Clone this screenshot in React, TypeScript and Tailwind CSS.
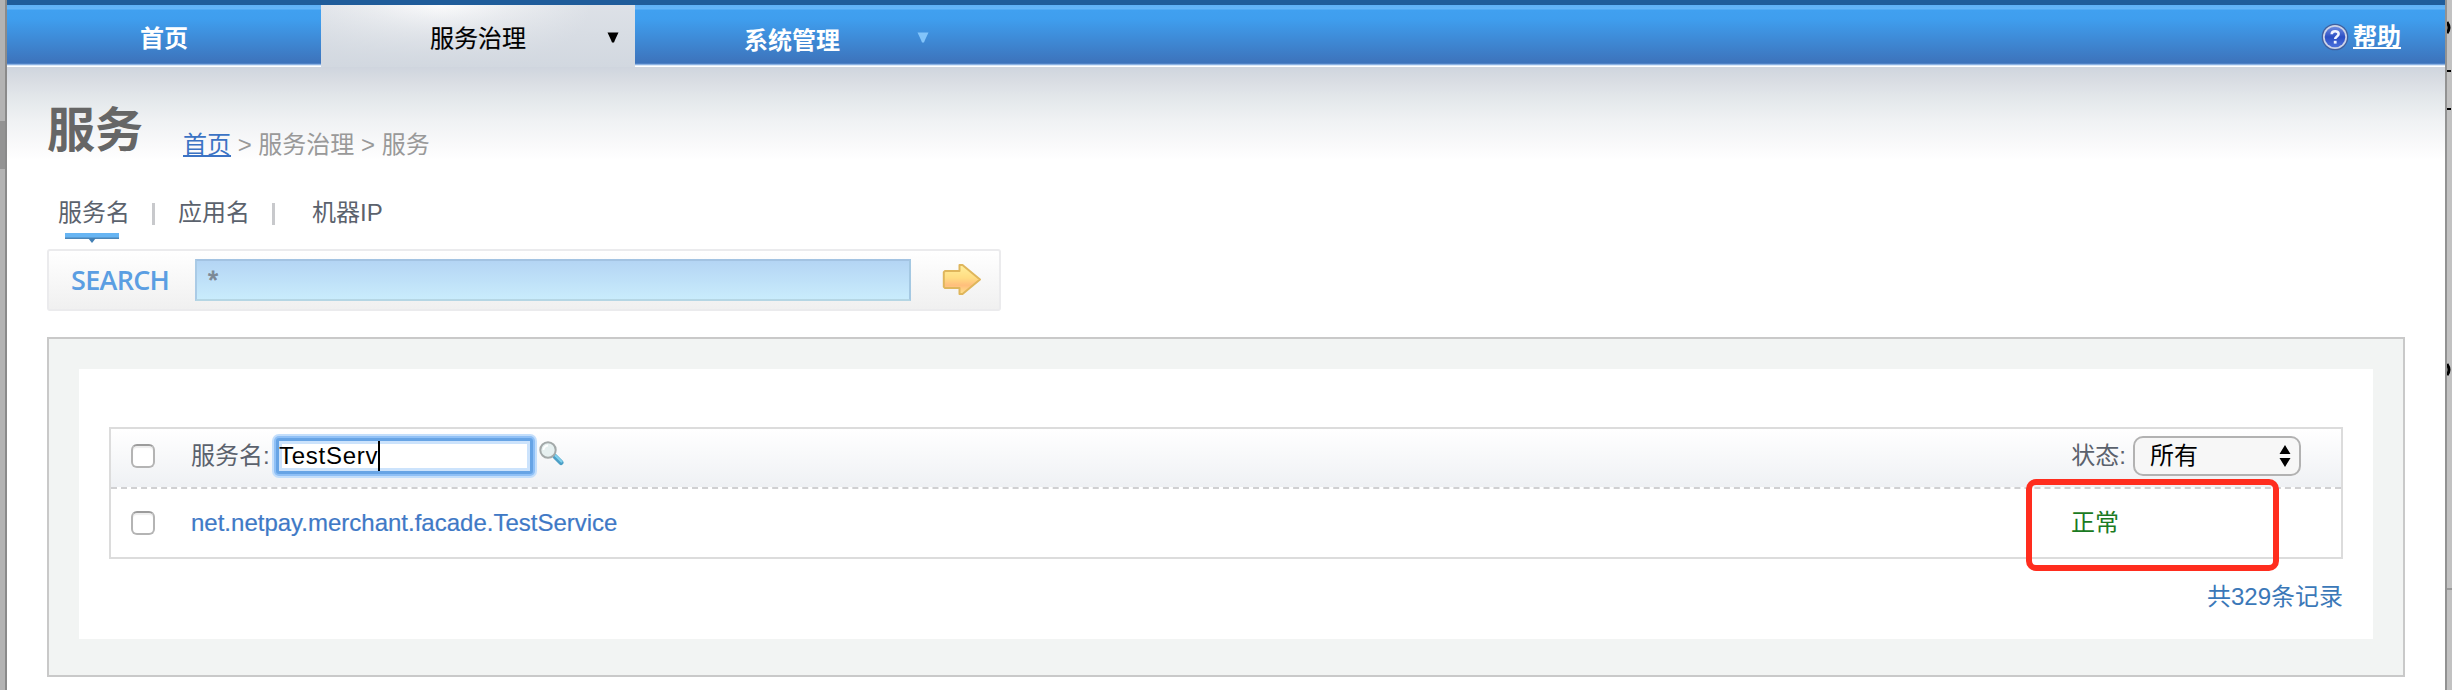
import React from "react";

function Triangle({ className }: { className: string }) {
  return (
    <svg viewBox="0 0 12 11" className={className} fill="currentColor">
      <path d="M0.5 0.5H11.5L8 8L7 10.5H5L4 8Z" />
    </svg>
  );
}

function HelpIcon() {
  return (
    <svg viewBox="0 0 28 28" className="size-7">
      <defs>
        <linearGradient id="help" x1="0" y1="0" x2="0" y2="1">
          <stop offset="0" stopColor="#6d8be0" />
          <stop offset="0.5" stopColor="#2c4fc4" />
          <stop offset="1" stopColor="#4a70dc" />
        </linearGradient>
      </defs>
      <circle cx="14" cy="14" r="13.3" fill="#3f5f9e" />
      <circle cx="14" cy="14" r="12" fill="#ccd3e8" />
      <circle cx="14" cy="14" r="10.3" fill="url(#help)" />
      <path d="M10.7 11.2C10.7 7.3 17.6 7.3 17.6 11C17.6 13.4 14.2 13.5 14.2 16" fill="none" stroke="#f2f5ff" strokeWidth="2.6" />
      <rect x="12.8" y="17.8" width="2.8" height="2.8" fill="#f2f5ff" />
    </svg>
  );
}

function ArrowIcon() {
  return (
    <svg viewBox="0 0 40 33" className="h-[33px] w-10">
      <defs>
        <linearGradient id="arrow" x1="0" y1="0" x2="0" y2="1">
          <stop offset="0" stopColor="#ffef9c" />
          <stop offset="0.45" stopColor="#ffdc82" />
          <stop offset="0.7" stopColor="#ffbe7c" />
          <stop offset="1" stopColor="#ffe28a" />
        </linearGradient>
      </defs>
      <path d="M3 8H17.5V2H20.5L38 16.5L20.5 31H17.5V25H3L1.8 23.8V9.2Z" fill="url(#arrow)" stroke="#dfb65c" strokeWidth="2" strokeLinejoin="round" />
    </svg>
  );
}

function Magnifier() {
  return (
    <svg viewBox="0 0 25 25" className="size-[25px]">
      <path d="M16 15.5L22 21.5" stroke="#4c9fc6" strokeWidth="5" strokeLinecap="round" />
      <path d="M16.5 14.5L22.5 20.5" stroke="#7fd0ec" strokeWidth="2.2" strokeLinecap="round" />
      <circle cx="9" cy="9" r="7.7" fill="#e6f0f0" stroke="#a3a9a9" strokeWidth="2" />
      <path d="M4.5 9A4.5 4.5 0 0 1 9 4.5" stroke="#fff" strokeWidth="1.8" fill="none" />
    </svg>
  );
}

function Checkbox() {
  return (
    <span className="block size-6 rounded-[6px] border-2 border-[#b4b4b4] border-t-[#9c9c9c] bg-white shadow-[inset_0_2px_1px_#eeeeee]" />
  );
}

function Nav() {
  return (
    <nav className="h-[67px] shrink-0 border-t-[5px] border-[#1f5c9a] bg-[linear-gradient(to_bottom,#5eb0f6_0,#66b5f8_4px,#40a0f0_5px,#3f9eee_14px,#3d73bb_58px,#5f90d0_59px,#b9d3f2_60px,#ffffff_61px)]">
      <div className="flex h-full">
        <div className="flex w-[314px] justify-center pt-4 text-2xl leading-[36px] font-bold text-white">首页</div>
        <div className="flex w-[314px] bg-[radial-gradient(ellipse_150px_70px_at_38%_0%,#fbfbfc_0%,#eceef1_45%,#dde1e7_100%)]">
          <div className="flex w-full bg-[linear-gradient(to_bottom,#d2d8e000,#d2d8e0)] pt-4">
            <div className="ml-[109px] w-[177px] text-2xl leading-[36px] text-black [-webkit-text-stroke:0.15px_black]">服务治理</div>
            <Triangle className="mt-[11px] h-[11px] w-3 text-black" />
          </div>
        </div>
        <div className="flex flex-1 pt-[18px]">
          <div className="ml-[109px] w-[173px] text-2xl leading-[36px] font-bold text-white">系统管理</div>
          <Triangle className="mt-[9px] h-[11px] w-3 text-[#82c4fa]" />
        </div>
        <div className="flex items-start gap-[4px] pt-[18px] pr-11">
          <HelpIcon />
          <span className="-mt-[4px] text-2xl leading-[36px] font-bold text-white underline decoration-2 underline-offset-2">帮助</span>
        </div>
      </div>
    </nav>
  );
}

function Filters() {
  return (
    <div className="flex h-[89px] items-start pt-[35px] pl-[51px] text-2xl leading-[36px] text-[#5b626d]">
      <div className="flex w-[94px] flex-col">
        <span>服务名</span>
        <svg viewBox="0 0 54 11" className="mt-0.5 ml-[7px] h-[11px] w-[54px]">
          <rect width="54" height="6" fill="#67b5f3" />
          <rect y="4.5" width="54" height="1.5" fill="#4c86b8" />
          <path d="M23 5H31L27 10Z" fill="#4380b5" />
        </svg>
      </div>
      <span className="mt-2 h-[22px] w-[3px] bg-[#c8c9cc]" />
      <span className="ml-[23px] w-[94px]">应用名</span>
      <span className="mt-2 h-[22px] w-[3px] bg-[#c8c9cc]" />
      <span className="ml-[37px]">机器IP</span>
    </div>
  );
}

function ServiceTable() {
  return (
    <div className="relative h-[132px] border-2 border-[#dcdcdc] bg-white">
      <div className="flex h-[60px] items-center border-b-2 border-dashed border-[#d0d0d2] bg-linear-to-b from-white to-[#eff1f4] pb-1 pl-5 text-2xl text-[#5b626d]">
        <Checkbox />
        <span className="ml-9 w-[85px] whitespace-nowrap">服务名:</span>
        <span className="flex h-9 w-[257px] items-center rounded-[3px] border-[3px] border-[#67a4e5] bg-white tracking-[0.75px] text-black shadow-[0_0_0_2px_#8fc0f6,0_0_0_4px_#c3defb,inset_0_0_0_3px_#cce3fc]">
          TestServ
          <span className="h-[30px] w-0.5 bg-black" />
        </span>
        <span className="-mt-[5px] ml-[6px]">
          <Magnifier />
        </span>
        <span className="ml-auto whitespace-nowrap">状态:</span>
        <span className="mr-10 ml-[7px] flex h-10 w-[168px] items-center justify-between rounded-[10px] border-2 border-[#b2b2b2] bg-[#f7f7f7] pr-2 pl-[15px] text-black">
          所有
          <svg viewBox="0 0 12 24" className="h-6 w-3">
            <path d="M6 1L11.5 10H0.5ZM6 23L11.5 14H0.5Z" fill="#000" />
          </svg>
        </span>
      </div>
      <div className="flex h-[68px] items-center pl-5 text-2xl">
        <Checkbox />
        <span className="ml-9 text-[#3f79c6] [-webkit-text-stroke:0.2px_#3f79c6]">net.netpay.merchant.facade.TestService</span>
        <span className="mr-[222px] ml-auto text-[#1a7a22]">正常</span>
      </div>
      <div className="absolute top-[50px] right-[62px] h-[92px] w-[253px] rounded-[10px] border-[6px] border-[#ff2d1e]" />
    </div>
  );
}

export default function App() {
  return (
    <div className="flex h-[690px] w-[2452px] overflow-hidden bg-[#b3b3b3] font-['Liberation_Sans','Noto_Sans_CJK_SC',sans-serif]">
      <div className="flex w-[7px] shrink-0 flex-col border-r-2 border-[#8a8a8a] pt-[121px]">
        <div className="h-12 bg-[#939393]" />
      </div>
      <div className="flex min-w-0 flex-1 flex-col bg-white">
        <Nav />
        <div className="h-[93px] bg-[linear-gradient(to_bottom,#cfd5de_0,#d9dde3_14px,#e4e8eb_32px,#f0f2f4_55px,#fafafb_80px,#ffffff_93px)] pl-10">
          <div className="flex items-start pt-[26px] whitespace-nowrap">
            <h1 className="text-[48px] leading-[76px] font-bold text-[#666]">服务</h1>
            <div className="mt-[34px] ml-10 text-2xl leading-[36px] text-[#999]">
              <a className="text-[#3b73c4] underline decoration-2 underline-offset-2">首页</a>
              {" > 服务治理 > 服务"}
            </div>
          </div>
        </div>
        <Filters />
        <div className="ml-10 flex h-[62px] w-[954px] rounded-[3px] border-2 border-[#ebebed] bg-linear-to-b from-white to-[#f0f0f0]">
          <div className="w-[146px] pt-[9px] pl-[22px] font-['Open_Sans'] text-[27px] leading-[40px] font-semibold tracking-[-0.7px] text-[#5b9ee2]">SEARCH</div>
          <div className="mt-2 h-[42px] w-[716px] border-2 border-t-[#a3c3e2] border-r-[#a4c8e2] border-b-[#b5d6e4] border-l-[#aacbe6] bg-linear-to-b from-[#b4d5f4] to-[#c9ecfc] pl-[11px] text-[26px] leading-[38px] text-[#7b8794] [-webkit-text-stroke:0.8px_#7b8794]">*</div>
          <span className="mt-3 ml-[31px]">
            <ArrowIcon />
          </span>
        </div>
        <div className="mt-[26px] mr-10 ml-10 h-[340px] border-2 border-[#c9c9c9] bg-[#f2f4f3] px-[30px] pt-[30px]">
          <div className="h-[270px] bg-white px-[30px] pt-[58px]">
            <ServiceTable />
            <div className="mt-5 text-right text-2xl leading-[36px] text-[#3b78b8]">共329条记录</div>
          </div>
        </div>
      </div>
      <div className="flex w-[7px] shrink-0 flex-col border-l-2 border-[#929292] bg-[#c2c2c2]">
        <svg viewBox="0 0 5 690" className="h-[690px] w-[5px]">
          <path d="M0 22Q4 28 0 33M0 364Q4 370 0 375" fill="none" stroke="#000" strokeWidth="3" />
          <path d="M0 71H4M0 109H4" stroke="#000" strokeWidth="2" />
          <path d="M0 589H5" stroke="#999" strokeWidth="2" />
        </svg>
      </div>
    </div>
  );
}
